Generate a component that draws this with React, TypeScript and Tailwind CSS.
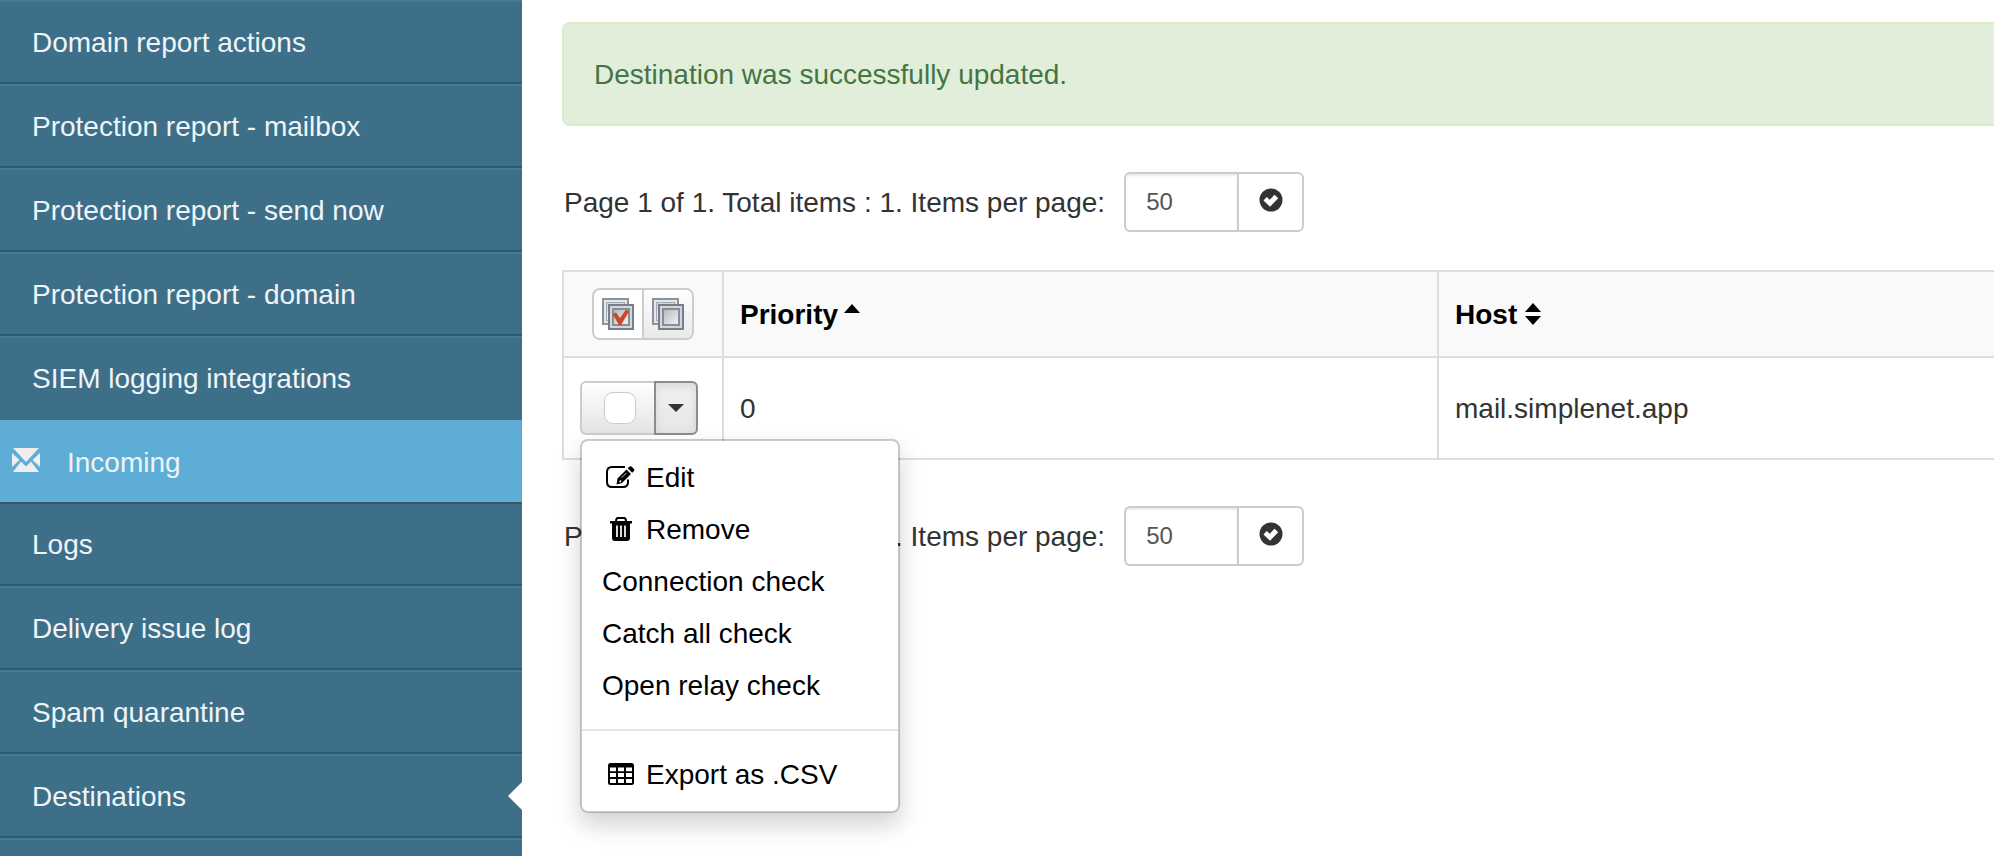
const itemsTop = ["Domain report actions", "Protection report - mailbox", "Protection report - send now", "Protection report - domain"];

function Item({ label, active, last }: { label: string; active?: boolean; last?: boolean }) {
  return (
    <li className="relative">
      <a
        href="#"
        className={`flex h-[84px] items-center border-t-2 border-b-2 border-t-[#447b96] bg-[#3e6f88] pt-0.5 pl-8 ${last ? "border-b-[#3e6f88]" : "border-b-[#2c5a74]"}`}
      >
        {label}
      </a>
      {active && (
        <svg className="absolute top-7 right-0 h-7 w-[14px]" viewBox="0 0 14 28" aria-hidden="true">
          <path d="M14 0 0 14 14 28Z" fill="#fff" />
        </svg>
      )}
    </li>
  );
}

function Pager({ id }: { id: string }) {
  return (
    <form className="flex items-center gap-[19px] text-[#333]">
      <label htmlFor={id} className="pt-0.5">Page 1 of 1. Total items : 1. Items per page:</label>
      <div className="flex h-[60px]">
        <input id={id} defaultValue="50" className="w-[113px] rounded-l-[6px] border-2 border-r-0 border-[#ccc] px-5 text-2xl text-[#555] shadow-[inset_0_2px_2px_rgba(0,0,0,0.075)] outline-none" />
        <button type="button" aria-label="Apply" className="flex w-[67px] items-center justify-center rounded-r-[6px] border-2 border-[#ccc] bg-white pb-1">
          <svg className="h-6 w-6" viewBox="0 0 24 24" aria-hidden="true">
            <circle cx="12" cy="12" r="11.5" fill="#333" />
            <path d="M4.500 12.400 7.700 9l3.100 2.800 4.700-5 3.700 3.500-8.200 8.400Z" fill="#fff" />
          </svg>
        </button>
      </div>
    </form>
  );
}

function StackIcon({ checked }: { checked?: boolean }) {
  return (
    <svg className="h-8 w-8" viewBox="0 0 32 32" aria-hidden="true">
      <defs>
        <linearGradient id="face" x1="0" y1="0" x2="1" y2="1">
          <stop offset="0" stopColor="#b4b7ba" />
          <stop offset="1" stopColor="#f4f5f6" />
        </linearGradient>
        <linearGradient id="back" x1="0" y1="0" x2="0" y2="1">
          <stop offset="0" stopColor="#cfd8d8" />
          <stop offset="1" stopColor="#f0f3f3" />
        </linearGradient>
      </defs>
      <rect x="1" y="1" width="25" height="25" fill="#e4e7ea" stroke="#8b929d" strokeWidth="2" />
      <rect x="4.500" y="4.500" width="18" height="18" fill="url(#back)" stroke="#a3abb3" />
      <rect x="7" y="7" width="24" height="24" fill="#d3d7dc" stroke="#777e8b" strokeWidth="2" />
      <rect x="11" y="11" width="16" height="16" fill="url(#face)" stroke="#868d99" strokeWidth="2" />
      {checked && <path d="M10.500 16 14 14.500 18 20 24 11.500 27 13.500 19 27H17Z" fill="#c9482a" />}
    </svg>
  );
}

function EditIcon() {
  return (
    <svg className="mr-[10px] mb-0.5 h-6 w-[30px]" viewBox="0 0 30 24" aria-hidden="true">
      <path d="M19 2H6Q1 2 1 7V17Q1 22 6 22H17Q22 22 22 17V14.500" fill="none" stroke="#000" strokeWidth="2" />
      <path d="M10.500 19.500 11.500 13.500 20.500 4.500 25 9 16 18Z" />
      <path d="M21.700 3.300 23.500 1.500Q24.500.8 25.500 1.500L28 4Q28.700 5 28 6L26.200 7.800Z" />
      <path d="M13 16.500 14.500 15 15.500 16.500 14 17.500Z" fill="#fff" />
      <path d="M15.500 12.800 20.500 7.800" stroke="#fff" strokeWidth="0.8" />
    </svg>
  );
}

function TrashIcon() {
  return (
    <svg className="mr-[10px] mb-0.5 h-6 w-[30px]" viewBox="0 0 30 24" aria-hidden="true">
      <path d="M4 4H26V6.500H24V21Q24 24 21 24H9Q6 24 6 21V6.500H4Z" />
      <path d="M10 4.500Q10 1 12 1H18Q20 1 20 4.500" fill="none" stroke="#000" strokeWidth="2" />
      <path d="M11 8.500V20M15 8.500V20M19 8.500V20" stroke="#fff" strokeWidth="1.700" />
    </svg>
  );
}

function TableIcon() {
  return (
    <svg className="mr-[10px] mb-0.5 h-6 w-[30px]" viewBox="0 0 30 24" aria-hidden="true">
      <rect x="2" y="1" width="26" height="22" rx="2.500" />
      <path d="M4 5.500h6v3.700H4Zm8 0h6v3.700h-6Zm8 0h6v3.700h-6ZM4 11h6v4H4Zm8 0h6v4h-6Zm8 0h6v4h-6ZM4 17h6v4H4Zm8 0h6v4h-6Zm8 0h6v4h-6Z" fill="#fff" />
    </svg>
  );
}

export default function App() {
  return (
    <div className="flex h-screen overflow-hidden bg-white font-['Liberation_Sans',Arial,sans-serif] text-[28px] leading-10">
      <nav className="w-[522px] shrink-0 bg-[#3e6f88] text-[#eef4f8]">
        <ul>
          {itemsTop.map((t) => <Item key={t} label={t} />)}
          <Item label="SIEM logging integrations" last />
          <li>
            <a href="#" className="flex h-[84px] items-center gap-[27px] border-b-2 border-[#3f5663] bg-[#5eadd6] pt-1 pl-3">
              <svg className="mb-1.5 h-[26px] w-7" viewBox="0 0 28 26" aria-hidden="true" fill="#eee">
                <path d="M1 1h26L14 15Z" />
                <path d="M0 6l7.500 7L0 20Z" />
                <path d="M28 6l-7.500 7 7.500 7Z" />
                <path d="M9 14.500 1 25h26L19 14.500l-5 5Z" />
              </svg>
              Incoming
            </a>
          </li>
          <li>
            <a href="#" className="flex h-[82px] items-center border-b-2 border-[#2c5a74] pt-0.5 pl-8">Logs</a>
          </li>
          <Item label="Delivery issue log" />
          <Item label="Spam quarantine" />
          <Item label="Destinations" active />
          <li className="h-5 border-t-2 border-[#447b96]" />
        </ul>
      </nav>
      <main className="min-w-0 flex-1 pt-[22px] pl-10">
        <div role="status" className="rounded-l-lg border-2 border-r-0 border-[#dcebc8] bg-[#e1efda] px-[30px] pt-[31px] pb-[29px] text-[#457544]">
          Destination was successfully updated.
        </div>
        <div className="mt-[46px] pl-0.5">
          <Pager id="per-page-top" />
        </div>
        <table className="mt-[38px] w-full table-fixed border-separate border-spacing-0 border-t-2 border-l-2 border-[#ddd] text-left">
          <colgroup>
            <col className="w-[160px]" />
            <col className="w-1/2" />
            <col />
          </colgroup>
          <thead>
            <tr className="h-[86px] bg-[#f9f9f9] text-black">
              <th className="border-r-2 border-b-2 border-[#ddd] p-0">
                <div className="ml-7 flex h-[52px] w-[102px] overflow-hidden rounded-lg border-2 border-[#ccc]">
                  <button type="button" aria-label="Select all" className="flex flex-1 items-center justify-center border-r-2 border-[#ccc] bg-white"><StackIcon checked /></button>
                  <button type="button" aria-label="Deselect all" className="flex flex-1 items-center justify-center bg-linear-to-b from-white to-[#e9e9e9]"><StackIcon /></button>
                </div>
              </th>
              <th className="border-r-2 border-b-2 border-[#ddd] px-4 py-0">
                <button type="button" className="flex items-center gap-1.5 pt-0.5 font-bold">
                  Priority
                  <svg className="mb-3.5 h-[9px] w-4" viewBox="0 0 16 9" aria-hidden="true"><path d="M8 0 16 9H0Z" /></svg>
                </button>
              </th>
              <th className="border-b-2 border-[#ddd] px-4 py-0">
                <button type="button" className="flex items-center gap-2 pt-0.5 font-bold">
                  Host
                  <svg className="mb-0.5 h-[22px] w-4" viewBox="0 0 16 22" aria-hidden="true"><path d="M8 0 16 9H0ZM0 13H16L8 22Z" /></svg>
                </button>
              </th>
            </tr>
          </thead>
          <tbody>
            <tr className="h-[102px] text-[#333]">
              <td className="border-r-2 border-b-2 border-[#ddd] p-0">
                <div className="relative ml-4 flex h-[54px] w-[118px]">
                  <label className="flex flex-1 items-center justify-center rounded-l-md border-2 border-r-0 border-[#ccc] bg-linear-to-b from-white to-[#e4e4e4] pl-1">
                    <input type="checkbox" aria-label="Select destination" className="h-8 w-8 appearance-none rounded-[9px] border border-[#ccc] bg-white" />
                  </label>
                  <button type="button" aria-label="Actions" aria-expanded="true" className="flex w-11 items-center justify-center rounded-r-md border-2 border-[#8c8c8c] bg-linear-to-b from-[#f2f2f2] to-[#e6e6e6] shadow-[inset_0_4px_8px_rgba(0,0,0,0.1)]">
                    <svg className="h-2 w-4" viewBox="0 0 16 8" aria-hidden="true"><path d="M0 0H16L8 8Z" fill="#333" /></svg>
                  </button>
                  <ul className="absolute top-[58px] left-0 w-[320px] rounded-lg border-2 border-black/20 bg-white bg-clip-padding pt-[11px] pb-[10px] text-black shadow-[0_12px_24px_rgba(0,0,0,0.18)]">
                    <li><a href="#" className="flex h-[52px] items-center pl-6"><EditIcon />Edit</a></li>
                    <li><a href="#" className="flex h-[52px] items-center pl-6"><TrashIcon />Remove</a></li>
                    <li><a href="#" className="flex h-[52px] items-center pl-5">Connection check</a></li>
                    <li><a href="#" className="flex h-[52px] items-center pl-5">Catch all check</a></li>
                    <li><a href="#" className="flex h-[52px] items-center pl-5">Open relay check</a></li>
                    <li role="separator" className="mt-[17px] mb-[18px] h-0.5 bg-[#e5e5e5]" />
                    <li><a href="#" className="flex h-[52px] items-center pl-6"><TableIcon />Export as .CSV</a></li>
                  </ul>
                </div>
              </td>
              <td className="border-r-2 border-b-2 border-[#ddd] px-4 pt-0.5 pb-0">0</td>
              <td className="border-b-2 border-[#ddd] px-4 pt-0.5 pb-0">mail.simplenet.app</td>
            </tr>
          </tbody>
        </table>
        <div className="mt-[46px] pl-0.5">
          <Pager id="per-page-bottom" />
        </div>
      </main>
    </div>
  );
}
